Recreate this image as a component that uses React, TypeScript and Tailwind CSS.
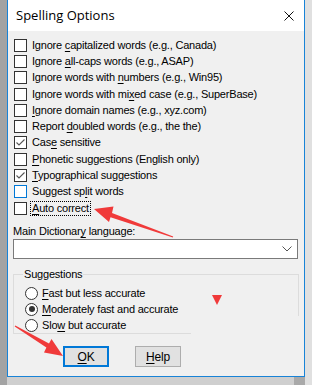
import React from "react";

const U = ({ c }: { c: string }) => (
  <span className="underline underline-offset-[2px] decoration-[1px]">{c}</span>
);

type Row = { label: React.ReactNode; checked?: boolean; hover?: boolean; focus?: boolean };

const rows: Row[] = [
  { label: <>Ignore <U c="c" />apitalized words (e.g., Canada)</> },
  { label: <>Ignore <U c="a" />ll-caps words (e.g., ASAP)</> },
  { label: <>Ignore words with <U c="n" />umbers (e.g., Win95)</> },
  { label: <>Ignore words with mi<U c="x" />ed case (e.g., SuperBase)</> },
  { label: <><U c="I" />gnore domain names (e.g., xyz.com)</> },
  { label: <>Report <U c="d" />oubled words (e.g., the the)</> },
  { label: <>Cas<U c="e" /> sensitive</>, checked: true },
  { label: <><U c="P" />honetic suggestions (English only)</> },
  { label: <><U c="T" />ypographical suggestions</>, checked: true },
  { label: <>Suggest sp<U c="l" />it words</>, hover: true },
  { label: <><U c="A" />uto correct</>, focus: true },
];

function Check({ r }: { r: Row }) {
  return (
    <div className="h-[16.3px] flex items-center ml-[1px]">
      <div
        className={`w-[13px] h-[13px] border bg-white flex items-center justify-center ${
          r.hover ? "border-[#0078d7]" : "border-[#333333]"
        }`}
      >
        {r.checked && (
          <svg width="11" height="11" viewBox="0 0 11 11">
            <polyline points="1.5,5.5 4,8 9.5,2.5" fill="none" stroke="#555" strokeWidth="1.1" />
          </svg>
        )}
      </div>
      <span
        className={`ml-[3px] px-[1px] leading-[13px] ${
          r.focus ? "border border-dotted border-black" : "border border-transparent"
        }`}
      >
        {r.label}
      </span>
    </div>
  );
}

function Radio({ label, on }: { label: React.ReactNode; on?: boolean }) {
  return (
    <div className="h-[16px] flex items-center">
      <div className="w-[13px] h-[13px] rounded-full border border-[#333333] bg-white flex items-center justify-center">
        {on && <div className="w-[6px] h-[6px] rounded-full bg-[#333333]" />}
      </div>
      <span className="ml-[4px] leading-[13px]">{label}</span>
    </div>
  );
}

export default function App() {
  return (
    <div
      className="w-[312px] h-[385px] bg-[#d4d4d4] flex overflow-hidden relative text-black"
      style={{ fontFamily: '"Liberation Sans", Arial, sans-serif' }}
    >
      <div className="w-[7px] h-full bg-[#a3a3a3] shrink-0" />
      <div className="flex flex-col shrink-0">
        <div className="w-[298px] h-[377px] border border-t-0 border-[#1883d7] bg-[#f0f0f0] flex flex-col">
          <div className="h-[31px] bg-white flex items-center justify-between pl-[8px] pr-[10px] shrink-0">
            <span className="text-[13px] mt-[1px]" style={{ fontFamily: '"Open Sans", "Noto Sans", sans-serif' }}>
              Spelling Options
            </span>
            <svg width="10" height="10" viewBox="0 0 10 10" className="mt-[1px]">
              <path d="M0.5 0.5 L9.5 9.5 M9.5 0.5 L0.5 9.5" stroke="#111" strokeWidth="1" />
            </svg>
          </div>
          <div className="flex flex-col pl-[5px] pr-[6px] pt-[6px] text-[11px] tracking-[-0.2px]">
            {rows.map((r, i) => (
              <Check key={i} r={r} />
            ))}
            <div className="mt-[9px] leading-[13px]">
              Main Dictionar<U c="y" /> language:
            </div>
            <div className="mt-[1px] h-[20px] border border-[#7a7a7a] bg-white flex items-center justify-end pr-[5px]">
              <svg width="10" height="6" viewBox="0 0 10 6">
                <polyline points="0.5,0.5 5,5 9.5,0.5" fill="none" stroke="#555" strokeWidth="1" />
              </svg>
            </div>
            <div className="relative mt-[15px] border-t border-l border-[#dcdcdc] h-[60px] pl-[11px] pt-[10px]">
              <span className="absolute -top-[7px] left-[9px] px-[1px] bg-[#f0f0f0] leading-[13px]">
                Suggestions
              </span>
              <div className="absolute -right-[1px] -top-[1px] w-px h-[42px] bg-[#dcdcdc]" />
              <div className="absolute -left-[1px] bottom-0 w-[178px] h-px bg-[#dcdcdc]" />
              <Radio label={<><U c="F" />ast but less accurate</>} />
              <Radio label={<><U c="M" />oderately fast and accurate</>} on />
              <Radio label={<>Slo<U c="w" /> but accurate</>} />
            </div>
            <div className="flex mt-[12px] ml-[50px] gap-[26px]">
              <div className="w-[46px] h-[21px] border-2 border-[#0078d7] bg-[#e1e1e1] flex items-center justify-center text-[12px]">
                <span><U c="O" />K</span>
              </div>
              <div className="w-[46px] h-[21px] border border-[#adadad] bg-[#e1e1e1] flex items-center justify-center text-[12px]">
                <span><U c="H" />elp</span>
              </div>
            </div>
          </div>
        </div>
        <div className="flex-1 bg-[#cfcfcf] flex justify-end">
          <div className="w-[11px] h-full bg-[#a9a9a9] mr-[0px]" />
        </div>
      </div>
      <div className="flex-1 bg-[#e0e0e0]" />

      {/* annotations */}
      <svg className="absolute left-0 top-0 pointer-events-none" width="312" height="385" viewBox="0 0 312 385">
        <polygon
          points="94,209 113.5,206.5 112,213 173.2,236.4 172.8,237.6 110.5,217.2 109,222"
          fill="#f03a3a"
        />
        <polygon
          points="63,356 44,352.5 46.4,347.6 14.7,326.4 15.3,325.6 49,343.4 51.5,339"
          fill="#f03a3a"
        />
        <polygon points="212,295 222,295 217,305" fill="#f03a3a" />
      </svg>
    </div>
  );
}
